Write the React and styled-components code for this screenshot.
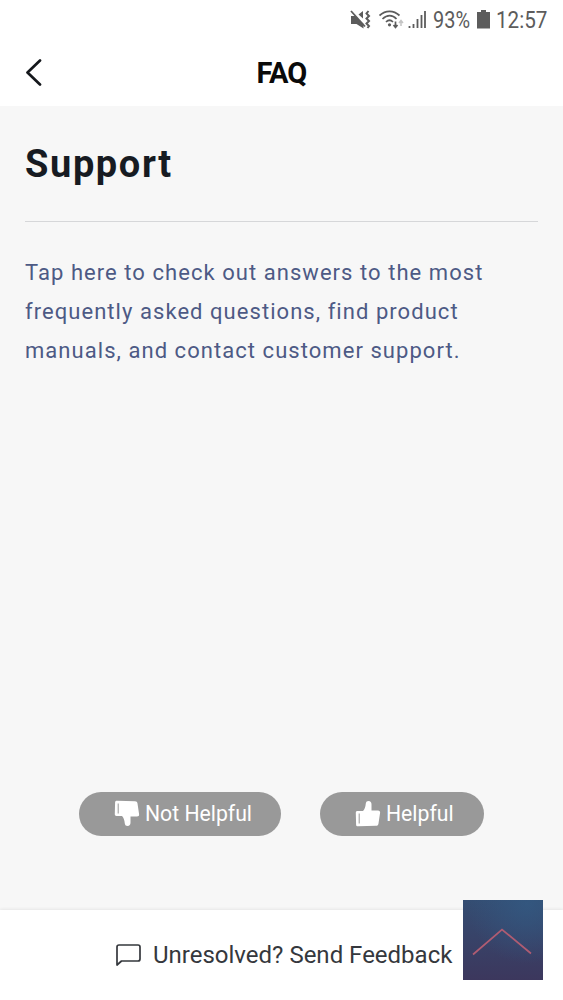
import styled, { createGlobalStyle } from "styled-components";

const GlobalStyle = createGlobalStyle`
  * {
    box-sizing: border-box;
  }

  body {
    margin: 0;
    background: #fff;
    font-family: Roboto, "Liberation Sans", sans-serif;
  }
`;

const Screen = styled.div`
  display: flex;
  flex-direction: column;
  width: 563px;
  height: 1000px;
  overflow: hidden;
  background: #fff;
`;

const StatusBar = styled.div`
  display: flex;
  flex: none;
  align-items: center;
  justify-content: flex-end;
  height: 40px;
  padding-right: 15px;
  color: #5c5c5c;
`;

const StatusIcon = styled.svg`
  display: block;
  flex: none;
  margin-right: ${(props) => props.$gap}px;
`;

const StatusText = styled.span`
  display: block;
  width: ${(props) => props.$width}px;
  margin-right: ${(props) => props.$gap || 0}px;
  font-size: 24px;
  line-height: 40px;
  white-space: nowrap;
  transform: scaleX(${(props) => props.$squeeze});
  transform-origin: left center;
`;

const Header = styled.header`
  display: grid;
  grid-template-columns: 68px 1fr 68px;
  flex: none;
  align-items: center;
  height: 66px;
`;

const BackButton = styled.button`
  display: flex;
  padding: 0 0 0 25px;
  border: 0;
  background: none;
  color: #15181c;
`;

const HeaderTitle = styled.h1`
  margin: 0;
  font-size: 29px;
  font-weight: 700;
  line-height: 66px;
  letter-spacing: -0.8px;
  text-align: center;
  color: #0a0a0a;
`;

const Content = styled.main`
  display: flex;
  flex: 1;
  flex-direction: column;
  padding: 0 25px;
  background: #f7f7f7;
`;

const Title = styled.h2`
  margin: 0;
  padding: 35px 0 33px;
  border-bottom: 1px solid #d6d7d9;
  font-size: 38px;
  font-weight: 700;
  line-height: 47px;
  letter-spacing: 1.6px;
  color: #171b22;
`;

const Description = styled.p`
  margin: 31px 0 0;
  font-size: 22px;
  line-height: 39px;
  letter-spacing: 1.05px;
  white-space: nowrap;
  color: #4d5a85;
`;

const Actions = styled.div`
  display: flex;
  justify-content: center;
  gap: 39px;
  margin-top: auto;
  padding-bottom: 74px;
`;

const PillButton = styled.button`
  display: flex;
  align-items: center;
  width: ${(props) => props.$width}px;
  height: 44px;
  padding: 0 0 1px 35px;
  border: 0;
  border-radius: 22px;
  background: #999;
  font-family: inherit;
  font-size: 21.2px;
  white-space: nowrap;
  color: #fff;
`;

const Thumb = styled.svg`
  flex: none;
  margin-right: 5px;
  transform: ${(props) => (props.$down ? "scaleY(-1)" : "none")};
`;

const Footer = styled.footer`
  display: flex;
  flex: none;
  align-items: center;
  height: 90px;
  padding-left: 115px;
  box-shadow: 0 -1px 3px rgba(0, 0, 0, 0.07);
  font-size: 24px;
  color: #35383d;
`;

const FooterLabel = styled.span`
  margin-left: 12px;
  white-space: nowrap;
`;

const ScrollTop = styled.button`
  position: absolute;
  top: 900px;
  left: 463px;
  width: 80px;
  height: 80px;
  padding: 0;
  border: 0;
  background: radial-gradient(circle at 80% 5%, rgba(51, 89, 130, 0.8) 0%, rgba(51, 89, 130, 0) 60%),
    linear-gradient(#344d72, #3c375d);
`;

function ThumbIcon({ down }) {
  return (
    <Thumb $down={down} width="26" height="27" viewBox="0 0 26 27">
      <path
        d="M2.500 11H8c1.500-1.500 2.500-4 2.800-7.500C11 1.800 12 1 13.500 1c2 0 3 1.500 3 3.500V10.500H23c1.500 0 2.300 1 2.100 2.300l-1.600 10.700c-.2 1.500-1 2.300-2.500 2.300L3 26.300c-1.200 0-1.900-.5-1.900-1.500L.8 12.700c0-1.100.6-1.700 1.700-1.700z"
        fill="currentColor"
      />
      <path d="M4.200 13.500v10" stroke="#999" strokeWidth="1" />
    </Thumb>
  );
}

function App() {
  return (
    <Screen>
      <GlobalStyle />
      <StatusBar>
        <StatusIcon $gap={8} width="21" height="20" viewBox="0 0 21 20">
          <path d="M1 6h4L13.500 14v4.500l-7-4.500H1z" fill="currentColor" />
          <path d="M8.500 4.500L13 1v7.500z" fill="currentColor" />
          <path d="M1 1l14 15.500" stroke="currentColor" strokeWidth="1.800" />
          <path
            d="M18.500 1l-2 2.500 2.500 2.500-2.500 2.500 2.500 2.500-2.500 2.500 2.500 2.500-1.500 2"
            stroke="currentColor"
            strokeWidth="2"
            fill="none"
          />
        </StatusIcon>
        <StatusIcon $gap={4} width="25" height="20" viewBox="0 0 25 20">
          <g stroke="currentColor" strokeWidth="1.700" fill="none">
            <path d="M.5 5.500c6-5.500 14-5.500 20 0M3.500 9c4.500-4.500 10-4.500 14 0M7 12c2.500-2.500 4.500-2.500 7 0" />
            <path d="M16.500 11.500v6M14.500 15l2 2.500 2-2.500" />
          </g>
          <circle cx="10.500" cy="14.800" r="1.600" fill="currentColor" />
          <path d="M22 16v-5M20 13l2-2.500 2 2.500" stroke="#c4c4c4" strokeWidth="1.500" fill="none" />
        </StatusIcon>
        <StatusIcon $gap={7} width="18" height="20" viewBox="0 0 18 20">
          <path d="M1.500 18v-2M5.500 18v-4M9.500 18V9M13.500 18V5M17 18V1" stroke="currentColor" strokeWidth="1.800" />
        </StatusIcon>
        <StatusText $width={37} $gap={7} $squeeze={0.83}>93%</StatusText>
        <StatusIcon $gap={6} width="13" height="20" viewBox="0 0 13 20">
          <path d="M4 0h5v2h4v16.500H0V2h4z" fill="currentColor" />
        </StatusIcon>
        <StatusText $width={52} $squeeze={0.86}>12:57</StatusText>
      </StatusBar>
      <Header>
        <BackButton aria-label="Back">
          <svg width="18" height="28" viewBox="0 0 18 28">
            <path
              d="M15 1.500L2.500 13.500L15 25.500"
              fill="none"
              stroke="currentColor"
              strokeWidth="2.700"
              strokeLinecap="round"
              strokeLinejoin="round"
            />
          </svg>
        </BackButton>
        <HeaderTitle>FAQ</HeaderTitle>
      </Header>
      <Content>
        <Title>Support</Title>
        <Description>
          Tap here to check out answers to the most
          <br />
          frequently asked questions, find product
          <br />
          manuals, and contact customer support.
        </Description>
        <Actions>
          <PillButton $width={202}>
            <ThumbIcon down />
            Not Helpful
          </PillButton>
          <PillButton $width={164}>
            <ThumbIcon />
            Helpful
          </PillButton>
        </Actions>
      </Content>
      <Footer>
        <svg width="26" height="24" viewBox="0 0 26 24">
          <path
            d="M4 2h19c1.200 0 2 .8 2 2v12c0 1.200-.8 2-2 2H6.500L2 22V4c0-1.200.8-2 2-2z"
            fill="none"
            stroke="currentColor"
            strokeWidth="1.700"
            strokeLinejoin="round"
          />
        </svg>
        <FooterLabel>Unresolved? Send Feedback</FooterLabel>
      </Footer>
      <ScrollTop aria-label="Back to top">
        <svg width="80" height="80" viewBox="0 0 80 80">
          <path d="M10 54.500L39 29.500L68 53.500" fill="none" stroke="#b05c72" strokeWidth="1.700" />
        </svg>
      </ScrollTop>
    </Screen>
  );
}

export default App;
